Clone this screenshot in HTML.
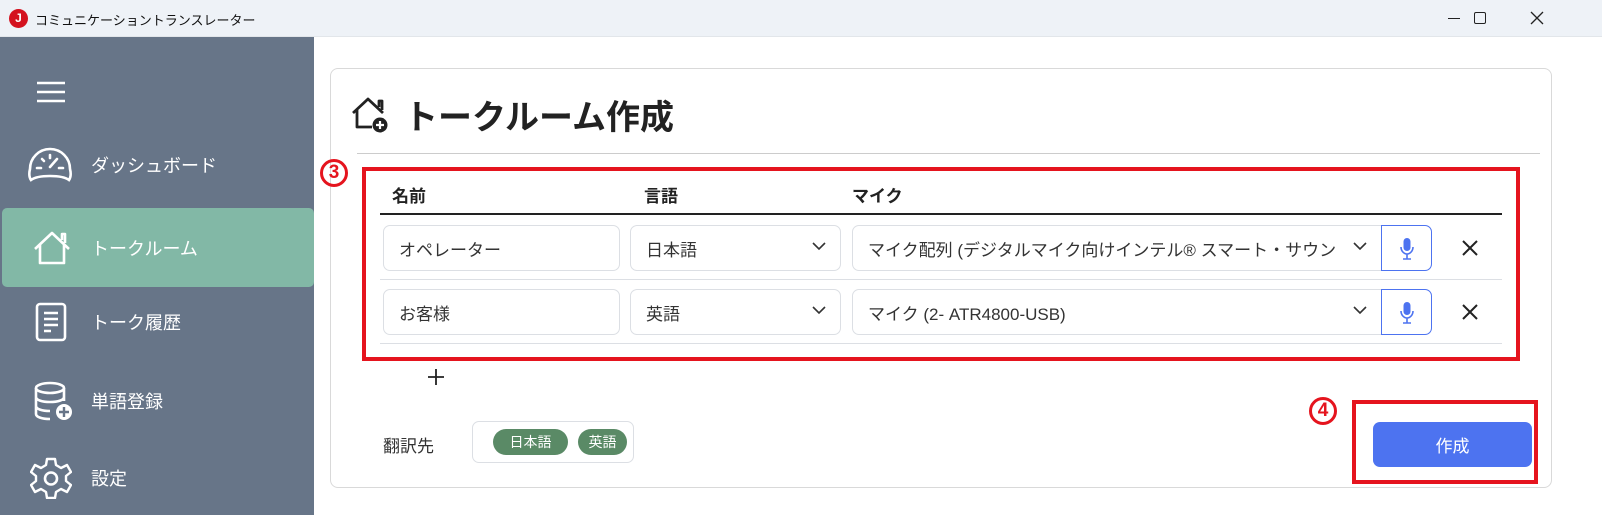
<!DOCTYPE html>
<html><head><meta charset="utf-8"><style>
*{box-sizing:border-box;margin:0;padding:0}
body{width:1602px;height:515px;overflow:hidden;background:#fff;font-family:"Liberation Sans","Noto Sans CJK JP",sans-serif;position:relative;color:#222}
.a{position:absolute}
.tb{left:0;top:0;width:1602px;height:37px;background:#eef2f7;border-bottom:1px solid #e2e6ea}
.sb{left:0;top:37px;width:314px;height:478px;background:#677588}
.nav{left:0;width:314px;height:79px;color:#fff;font-size:18px;display:flex;align-items:center}
.nav span{position:absolute;left:91px}
.nav svg{position:absolute;left:28px}
.inp{border:1px solid #dcdfe4;border-radius:7px;background:#fff;font-size:17px;display:flex;align-items:center;padding-left:15px;color:#333}
.chev{position:absolute;right:14px;top:15px}
.mic{border:1px solid #4d73f0;border-radius:0 7px 7px 0;background:#fff}
.red{border:4px solid #e5141e}
.circ{width:28px;height:28px;border:3px solid #e5141e;border-radius:50%;color:#e5141e;font-weight:bold;font-size:19px;display:flex;align-items:center;justify-content:center}
.chip{background:#5a8a66;color:#fff;border-radius:13px;font-size:14px;height:26px;display:flex;align-items:center;justify-content:center}
</style></head><body>
<div class="a tb">
 <div class="a" style="left:9px;top:9px;width:19px;height:19px;border-radius:50%;background:#d4121f;color:#fff;font-size:12px;font-weight:bold;text-align:center;line-height:19px">J</div>
 <div class="a" style="left:35px;top:10px;font-size:13px;color:#111">コミュニケーショントランスレーター</div>
 <div class="a" style="left:1448px;top:18px;width:12px;height:1px;background:#222"></div>
 <div class="a" style="left:1474px;top:12px;width:12px;height:12px;border:1.3px solid #222;border-radius:2px"></div>
 <svg class="a" style="left:1530px;top:11px" width="14" height="14"><path d="M1 1L13 13M13 1L1 13" stroke="#222" stroke-width="1.3"/></svg>
</div>
<div class="a sb">
 <svg class="a" style="left:37px;top:44px" width="28" height="22"><path d="M0 2H28M0 11H28M0 20H28" stroke="#fff" stroke-width="2.5"/></svg>
</div>
<div class="a nav" style="top:125px"><svg width="44" height="36" viewBox="0 0 44 36"><path d="M3 33C1 30 1 26 2 22A20 20 0 0 1 42 22C43 26 43 30 41 33C37 30 30 29 22 29C14 29 7 30 3 33Z" fill="none" stroke="#fff" stroke-width="2.6"/><path d="M22 20L29 12M9 21H13M31 21H35M14 12L16 14M22 8V11" stroke="#fff" stroke-width="2.6" stroke-linecap="round"/></svg><span>ダッシュボード</span></div>
<div class="a" style="left:2px;top:208px;width:312px;height:79px;background:#82b8a6;border-radius:5px"></div>
<div class="a nav" style="top:208px"><svg width="40" height="36" viewBox="0 0 40 36" style="left:32px"><path d="M3 19L20 3L37 19M8 15V33H32V15M30 10V4H33V13" fill="none" stroke="#fff" stroke-width="2.6" stroke-linejoin="round"/></svg><span>トークルーム</span></div>
<div class="a nav" style="top:282px"><svg width="32" height="40" viewBox="0 0 32 40" style="left:35px"><rect x="2" y="2" width="28" height="36" rx="3" fill="none" stroke="#fff" stroke-width="2.6"/><path d="M9 11H23M9 17H23M9 23H23M9 29H16" stroke="#fff" stroke-width="2.4"/></svg><span>トーク履歴</span></div>
<div class="a nav" style="top:361px"><svg width="44" height="40" viewBox="0 0 44 40" style="left:34px"><ellipse cx="16" cy="7" rx="14" ry="5" fill="none" stroke="#fff" stroke-width="2.6"/><path d="M2 7V33C2 36 8 38 16 38M30 7V20M2 16C2 19 8 21 16 21C24 21 30 19 30 16M2 25C2 28 8 30 16 30" fill="none" stroke="#fff" stroke-width="2.6"/><circle cx="30" cy="31" r="8" fill="#fff"/><path d="M30 26V36M25 31H35" stroke="#677588" stroke-width="2.4"/></svg><span>単語登録</span></div>
<div class="a nav" style="top:438px"><svg width="42" height="42" viewBox="0 0 42 42" style="left:30px"><path d="M17 2H25L26 8L31 11L37 8L41 15L36 19V24L41 28L37 35L31 32L26 35L25 41H17L16 35L11 32L5 35L1 28L6 24V19L1 15L5 8L11 11L16 8Z" fill="none" stroke="#fff" stroke-width="2.4" stroke-linejoin="round"/><circle cx="21" cy="21.5" r="6" fill="none" stroke="#fff" stroke-width="2.6"/></svg><span>設定</span></div>

<div class="a" style="left:330px;top:68px;width:1222px;height:420px;border:1px solid #d9d9d9;border-radius:8px"></div>
<svg class="a" style="left:350px;top:95px" width="40" height="38" viewBox="0 0 40 38"><path d="M3 18L18 4L33 18M7 14V32H22M29 12V6H32V15" fill="none" stroke="#222" stroke-width="2.8" stroke-linejoin="round"/><circle cx="30" cy="30" r="7.5" fill="#222"/><path d="M30 26V34M26 30H34" stroke="#fff" stroke-width="2.2"/></svg>
<div class="a" style="left:404px;top:90px;font-size:34px;font-weight:bold;color:#222">トークルーム作成</div>
<div class="a" style="left:357px;top:153px;width:1183px;height:1px;background:#ccc"></div>

<div class="a circ" style="left:320px;top:159px">3</div>
<div class="a red" style="left:362px;top:167px;width:1158px;height:194px"></div>
<div class="a" style="left:392px;top:182px;font-size:17px;font-weight:bold">名前</div>
<div class="a" style="left:644px;top:182px;font-size:17px;font-weight:bold">言語</div>
<div class="a" style="left:852px;top:182px;font-size:17px;font-weight:bold">マイク</div>
<div class="a" style="left:380px;top:213px;width:1122px;height:2px;background:#222"></div>

<div class="a inp" style="left:383px;top:225px;width:237px;height:46px">オペレーター</div>
<div class="a inp" style="left:630px;top:225px;width:211px;height:46px">日本語<svg class="chev" width="14" height="10"><path d="M1 2L7 8L13 2" fill="none" stroke="#333" stroke-width="1.6"/></svg></div>
<div class="a inp" style="left:852px;top:225px;width:530px;height:46px;border-radius:7px 0 0 7px;overflow:hidden;white-space:nowrap;padding-right:40px">マイク配列 (デジタルマイク向けインテル® スマート・サウンド・テクノロジー)<div class="a" style="right:0;top:0;width:42px;height:44px;background:#fff"></div><svg class="chev" width="14" height="10"><path d="M1 2L7 8L13 2" fill="none" stroke="#333" stroke-width="1.6"/></svg></div>
<div class="a mic" style="left:1381px;top:225px;width:51px;height:46px"><svg class="a" style="left:17px;top:11px" width="16" height="24" viewBox="0 0 16 24"><rect x="4.5" y="1" width="7" height="13" rx="3.5" fill="#4d73f0"/><path d="M2 10C2 14 5 17 8 17C11 17 14 14 14 10M8 17V22M4 22H12" fill="none" stroke="#4d73f0" stroke-width="1.6"/></svg></div>
<svg class="a" style="left:1462px;top:240px" width="16" height="16"><path d="M1 1L15 15M15 1L1 15" stroke="#222" stroke-width="2"/></svg>
<div class="a" style="left:380px;top:279px;width:1122px;height:1px;background:#dcdfe4"></div>

<div class="a inp" style="left:383px;top:289px;width:237px;height:46px">お客様</div>
<div class="a inp" style="left:630px;top:289px;width:211px;height:46px">英語<svg class="chev" width="14" height="10"><path d="M1 2L7 8L13 2" fill="none" stroke="#333" stroke-width="1.6"/></svg></div>
<div class="a inp" style="left:852px;top:289px;width:530px;height:46px;border-radius:7px 0 0 7px">マイク (2- ATR4800-USB)<svg class="chev" width="14" height="10"><path d="M1 2L7 8L13 2" fill="none" stroke="#333" stroke-width="1.6"/></svg></div>
<div class="a mic" style="left:1381px;top:289px;width:51px;height:46px"><svg class="a" style="left:17px;top:11px" width="16" height="24" viewBox="0 0 16 24"><rect x="4.5" y="1" width="7" height="13" rx="3.5" fill="#4d73f0"/><path d="M2 10C2 14 5 17 8 17C11 17 14 14 14 10M8 17V22M4 22H12" fill="none" stroke="#4d73f0" stroke-width="1.6"/></svg></div>
<svg class="a" style="left:1462px;top:304px" width="16" height="16"><path d="M1 1L15 15M15 1L1 15" stroke="#222" stroke-width="2"/></svg>
<div class="a" style="left:380px;top:343px;width:1122px;height:1px;background:#dcdfe4"></div>

<svg class="a" style="left:428px;top:369px" width="16" height="16"><path d="M8 0V16M0 8H16" stroke="#222" stroke-width="1.8"/></svg>
<div class="a" style="left:383px;top:432px;font-size:17px;color:#333">翻訳先</div>
<div class="a" style="left:472px;top:421px;width:162px;height:42px;border:1px solid #dcdfe4;border-radius:7px"></div>
<div class="a chip" style="left:493px;top:429px;width:75px">日本語</div>
<div class="a chip" style="left:578px;top:429px;width:49px">英語</div>

<div class="a circ" style="left:1309px;top:397px">4</div>
<div class="a red" style="left:1352px;top:400px;width:186px;height:84px"></div>
<div class="a" style="left:1373px;top:422px;width:159px;height:45px;background:#4d73f0;border-radius:7px;color:#fff;font-size:17px;display:flex;align-items:center;justify-content:center">作成</div>
</body></html>
